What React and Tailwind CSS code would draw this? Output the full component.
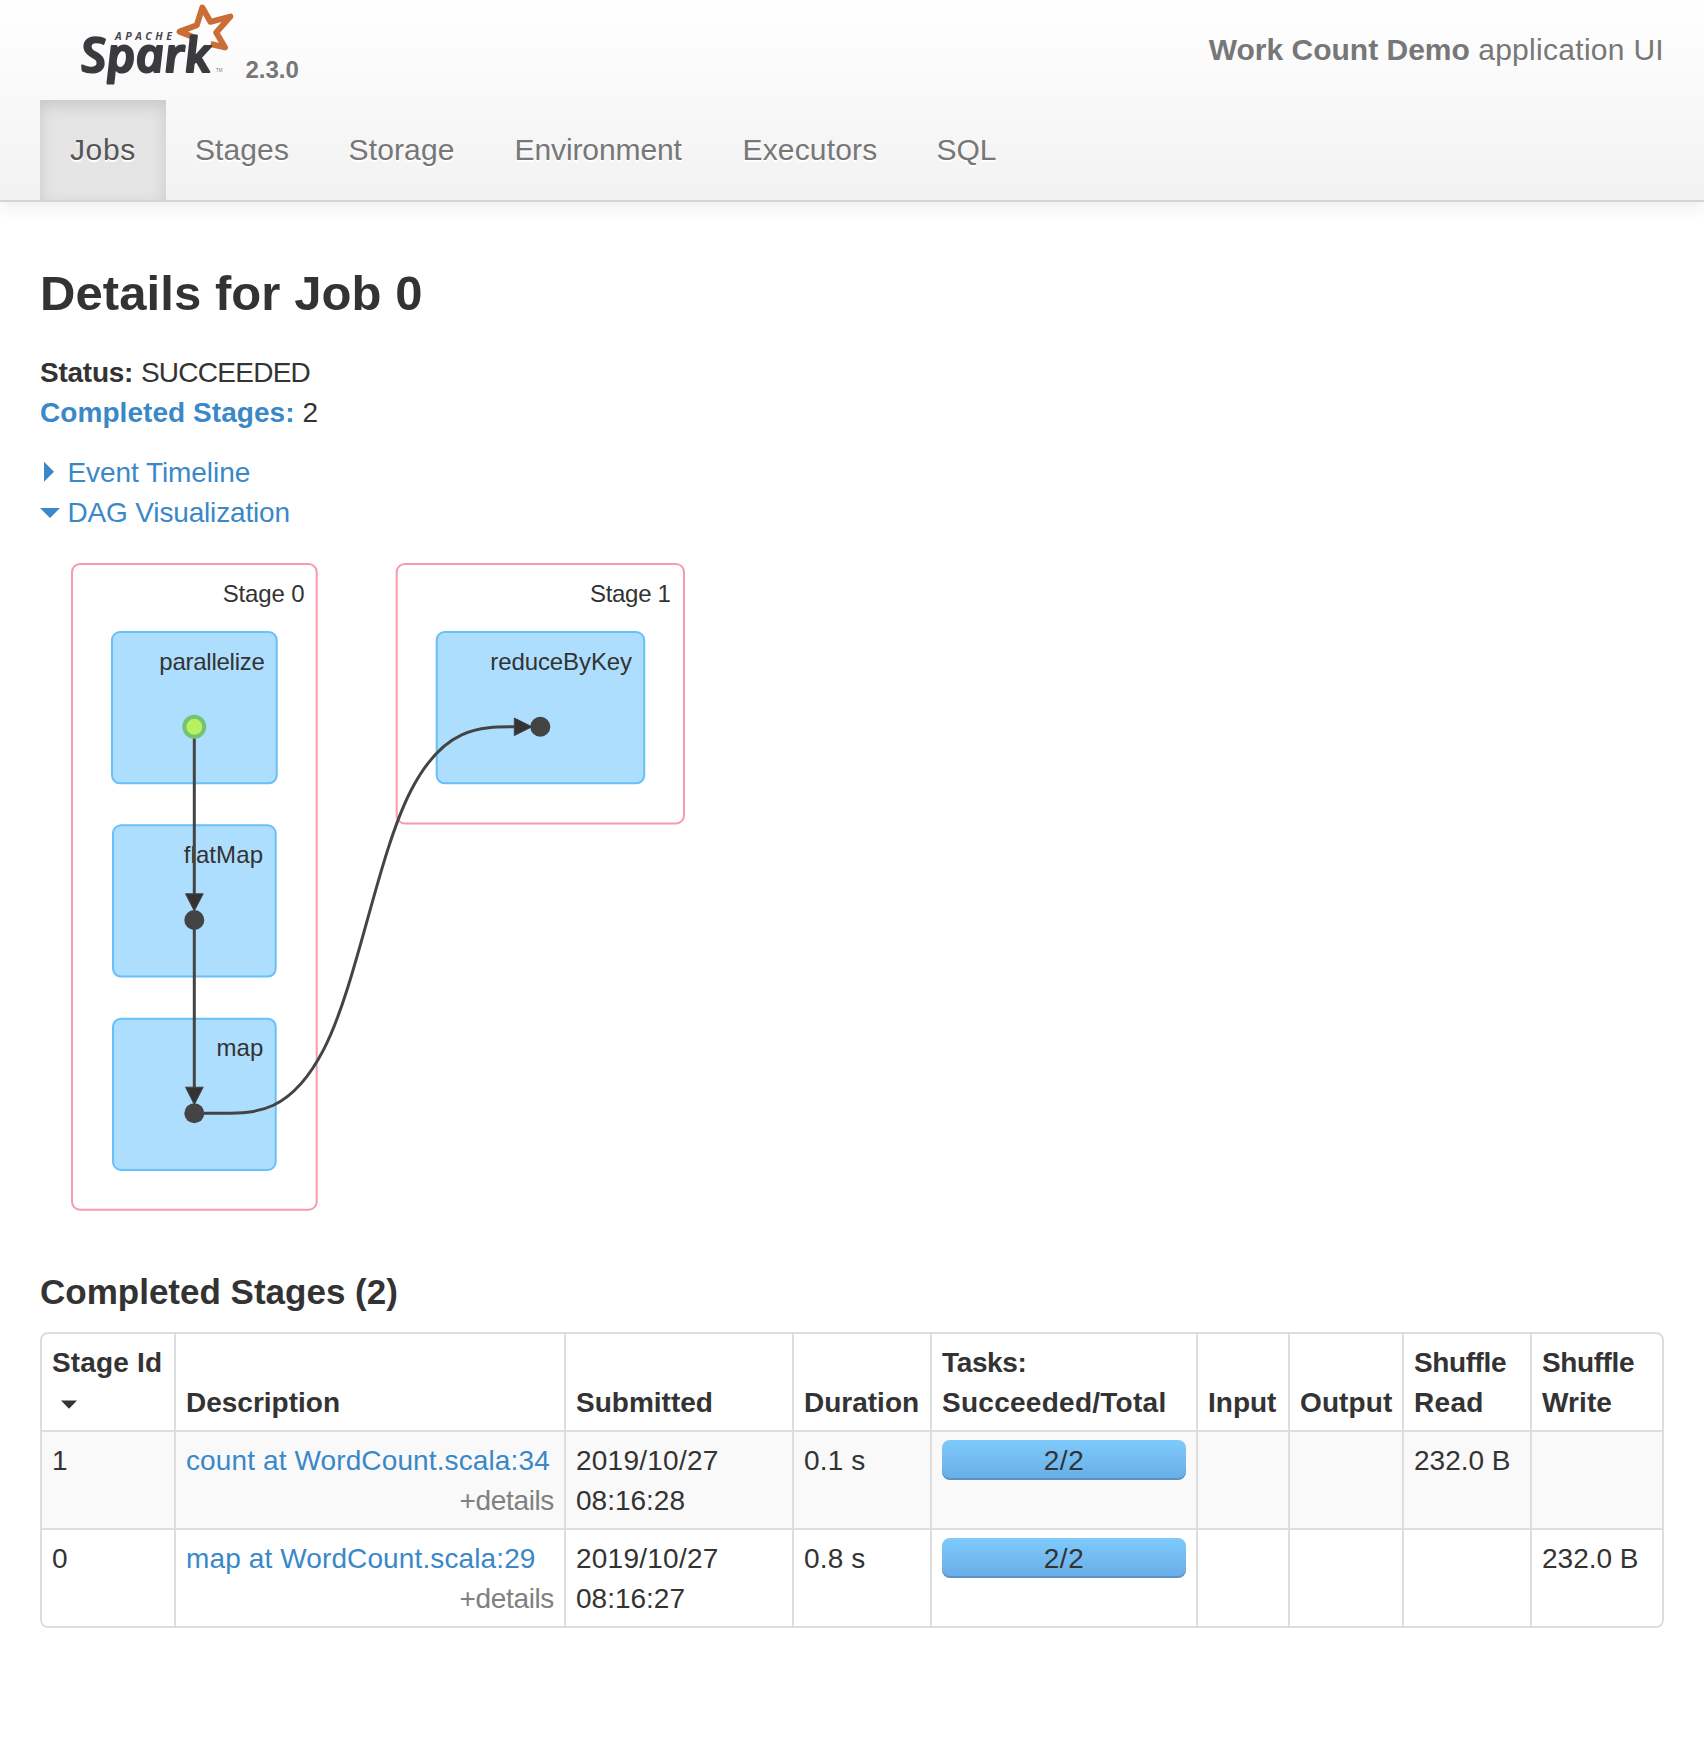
const TABS = [
  { name: "Jobs", cls: "w-[126px] tracking-[0.6px]", active: true },
  { name: "Stages", cls: "w-[152.5px] -ml-px mr-px tracking-[0.1px]" },
  { name: "Storage", cls: "w-[166px] tracking-[0.15px]" },
  { name: "Environment", cls: "w-[228px] tracking-[-0.1px]" },
  { name: "Executors", cls: "w-[194px] tracking-[0.16px]" },
  { name: "SQL", cls: "w-[120px] tracking-[-0.1px]" },
];

const COLUMNS = [
  { lines: [["Stage Id", "tracking-[0.16px]"]], cls: "w-[132px]", sorted: true },
  { lines: [["Description", ""]], cls: "w-[390px]" },
  { lines: [["Submitted", ""]], cls: "w-[228px]" },
  { lines: [["Duration", ""]], cls: "w-[138px]" },
  { lines: [["Tasks:", "tracking-[-0.36px]"], ["Succeeded/Total", "tracking-[0.27px]"]], cls: "w-[266px]" },
  { lines: [["Input", ""]], cls: "w-[92px]" },
  { lines: [["Output", "tracking-[0.1px]"]], cls: "w-[114px]" },
  { lines: [["Shuffle", "tracking-[-0.4px]"], ["Read", "tracking-[0.3px]"]], cls: "w-[128px]" },
  { lines: [["Shuffle", "tracking-[-0.4px]"], ["Write", "tracking-[0.1px]"]], cls: "w-[132px]" },
];

const STAGES = [
  { id: "1", desc: "count at WordCount.scala:34", date: "2019/10/27", time: "08:16:28", duration: "0.1 s", tasks: "2/2", read: "232.0 B", write: "" },
  { id: "0", desc: "map at WordCount.scala:29", date: "2019/10/27", time: "08:16:27", duration: "0.8 s", tasks: "2/2", read: "", write: "232.0 B" },
];

function SparkLogo() {
  return (
    <svg width="200" height="100" viewBox="40 0 200 100" className="block shrink-0" aria-label="Apache Spark">
      <path
        d="M195 37.8 L179.6 31.6 L196.8 25.2 L202.3 7.6 L210.4 21.8 L230.4 16.6 L216.2 32.4 L225 47.4 L210.7 44"
        fill="none"
        stroke="#cb6d36"
        strokeWidth="6"
        strokeLinejoin="round"
      />
      <text x="115" y="39.7" fontSize="10.6" fontWeight="700" fontStyle="italic" fontFamily="Open Sans, sans-serif" fill="#4a484b" textLength="57">
        APACHE
      </text>
      <g transform="translate(82 71.5) skewX(6)">
        <text
          x="0"
          y="0"
          fontSize="48"
          fontWeight="600"
          fontStyle="italic"
          fontFamily="Open Sans, sans-serif"
          fill="#3c3a3e"
          stroke="#3c3a3e"
          strokeWidth="2.2"
          strokeLinejoin="round"
          textLength="130"
          lengthAdjust="spacingAndGlyphs"
        >
          Spark
        </text>
      </g>
      <text x="216" y="72.3" fontSize="4.5" fontFamily="Open Sans, sans-serif" fill="#777">TM</text>
    </svg>
  );
}

function Header() {
  return (
    <header className="h-[202px] border-b-2 border-[#d4d4d4] bg-linear-to-b from-white to-[#f2f2f2] px-10 text-[#777] shadow-[0_2px_20px_rgba(0,0,0,0.1)]">
      <div className="flex h-[100px] items-start">
        <SparkLogo />
        <span className="mt-[50px] ml-[5.5px] text-[24px] leading-[40px] font-bold [text-shadow:0_2px_0_#fff]">2.3.0</span>
        <p className="mt-[30px] ml-auto text-[30px] leading-[40px] whitespace-nowrap">
          <strong>Work Count Demo</strong> <span className="tracking-[0.29px]">application UI</span>
        </p>
      </div>
      <nav className="flex h-[100px]">
        {TABS.map((t) => (
          <a
            key={t.name}
            className={
              "block px-[30px] pt-[30px] pb-[30px] text-[30px] leading-[40px] [text-shadow:0_2px_0_#fff] " +
              t.cls +
              (t.active ? " bg-[#e5e5e5] text-[#555] shadow-[inset_0_6px_16px_rgba(0,0,0,0.125)]" : "")
            }
          >
            {t.name}
          </a>
        ))}
      </nav>
    </header>
  );
}

function OpBox({ x, y, w, h, label, lx, ls }) {
  return (
    <g>
      <rect x={x} y={y} width={w} height={h} rx="8" fill="#addefd" stroke="#68bffa" strokeWidth="2" />
      <text x={lx} y={y + 37.7} fontSize="24" fill="#333" letterSpacing={ls}>{label}</text>
    </g>
  );
}

function DagChart() {
  return (
    <svg width="1624" height="739" viewBox="40 533 1624 739" className="block" fontFamily="Liberation Sans, sans-serif">
      <g fill="#fff" stroke="#f69bad" strokeWidth="2">
        <rect x="72" y="564" width="244.7" height="645.7" rx="8" />
        <rect x="396.7" y="564" width="287.3" height="259.5" rx="8" />
      </g>
      <text x="222.7" y="602" fontSize="24" fill="#333" letterSpacing="-0.15">Stage 0</text>
      <text x="590" y="602" fontSize="24" fill="#333" letterSpacing="-0.3">Stage 1</text>
      <OpBox x={112} y={632} w={164.7} h={151.3} label="parallelize" lx={159.3} ls="-0.25" />
      <OpBox x={113} y={825.3} w={162.7} h={151.3} label="flatMap" lx={183.7} ls="0.1" />
      <OpBox x={113} y={1018.7} w={162.7} h={151.3} label="map" lx={216.4} ls="0.18" />
      <OpBox x={436.7} y={632} w={207.5} h={151.3} label="reduceByKey" lx={490.3} ls="-0.1" />
      <g fill="none" stroke="#444" strokeWidth="3">
        <path d="M194.3 727V900" />
        <path d="M194.3 920V1092" />
        <path d="M194.3 1113.3H222C256 1113.3 291 1113.3 324 1048.9C357 984.4 377.6 855.6 410.6 791.2C443.6 726.8 478.6 726.8 516.6 726.8" />
      </g>
      <g fill="#333" stroke="#444" strokeWidth="1">
        <path d="M185.5 893.8H203.2L194.3 911Z" />
        <path d="M185.5 1087.2H203.2L194.3 1104.5Z" />
        <path d="M514.3 718V735.6L532 726.8Z" />
      </g>
      <circle cx="194.3" cy="726.8" r="10" fill="#b6f162" stroke="#73c373" strokeWidth="4" />
      <g fill="#444">
        <circle cx="194.3" cy="920" r="10" />
        <circle cx="194.3" cy="1113.3" r="10" />
        <circle cx="540.3" cy="726.8" r="10" />
      </g>
    </svg>
  );
}

function StageTable() {
  return (
    <div className="mt-5 overflow-hidden rounded-[8px] border-2 border-[#ddd]">
      <table className="w-full table-fixed border-separate border-spacing-0 text-left">
        <thead>
          <tr>
            {COLUMNS.map((c, i) => (
              <th key={i} className={"px-[10px] pt-[9px] pb-[7px] align-bottom font-bold whitespace-nowrap " + c.cls + (i ? " border-l-2 border-[#ddd]" : "")}>
                {c.lines.map(([text, cls]) => (
                  <span key={text} className={"block " + cls}>{text}</span>
                ))}
                {c.sorted && (
                  <span className="flex h-10 pt-[17px] pl-[8.5px]">
                    <svg width="16" height="9" viewBox="0 0 16 9"><path d="M0 0.5H16L8 8.7Z" fill="#333" /></svg>
                  </span>
                )}
              </th>
            ))}
          </tr>
        </thead>
        <tbody>
          {STAGES.map((s, r) => {
            const td = "border-t-2 border-[#ddd] px-[10px] pt-[9px] pb-[7px] align-top whitespace-nowrap";
            const tdl = td + " border-l-2";
            return (
              <tr key={s.id} className={r === 0 ? "bg-[#f9f9f9]" : "bg-white"}>
                <td className={td}>{s.id}</td>
                <td className={tdl}>
                  <a className="block tracking-[0.12px] text-[#3a88c8]">{s.desc}</a>
                  <span className="block text-right tracking-[-0.36px] text-[#808080]">+details</span>
                </td>
                <td className={tdl}>
                  <span className="block tracking-[0.24px]">{s.date}</span>
                  <span className="block">{s.time}</span>
                </td>
                <td className={tdl + " tracking-[0.15px]"}>{s.duration}</td>
                <td className={tdl}>
                  <div className="-mt-px h-10 rounded-[8px] bg-linear-to-b from-[#7ecafc] to-[#69ade7] text-center leading-[42px] tracking-[0.6px] shadow-[inset_0_-2px_0_rgba(0,0,0,0.15)]">{s.tasks}</div>
                </td>
                <td className={tdl} />
                <td className={tdl} />
                <td className={tdl}>{s.read}</td>
                <td className={tdl}>{s.write}</td>
              </tr>
            );
          })}
        </tbody>
      </table>
    </div>
  );
}

export default function App() {
  return (
    <div className="min-h-[1760px] w-[1704px] bg-white font-['Liberation_Sans',Arial,sans-serif] text-[28px] leading-[40px] text-[#333]">
      <Header />
      <main className="px-10 pt-[51px]">
        <h3 className="text-[49px] leading-[80px] font-bold tracking-[0.08px]">Details for Job 0</h3>
        <ul className="mt-5">
          <li>
            <strong className="tracking-[-0.25px]">Status:</strong> <span className="tracking-[-0.74px]">SUCCEEDED</span>
          </li>
          <li>
            <strong className="tracking-[0.06px] text-[#3a88c8]">Completed Stages:</strong> 2
          </li>
        </ul>
        <div className="mt-5 text-[#3a88c8]">
          <div className="flex">
            <svg width="27.5" height="40" viewBox="0 0 27.5 40"><path d="M4 8.7V28.7L14 18.7Z" fill="currentColor" /></svg>
            <span className="tracking-[-0.07px]">Event Timeline</span>
          </div>
          <div className="flex">
            <svg width="27.5" height="40" viewBox="0 0 27.5 40"><path d="M0 15H20L10 25Z" fill="currentColor" /></svg>
            <span className="tracking-[-0.16px]">DAG Visualization</span>
          </div>
        </div>
        <DagChart />
        <h4 className="text-[35px] leading-[40px] font-bold">Completed Stages (2)</h4>
        <StageTable />
      </main>
    </div>
  );
}
